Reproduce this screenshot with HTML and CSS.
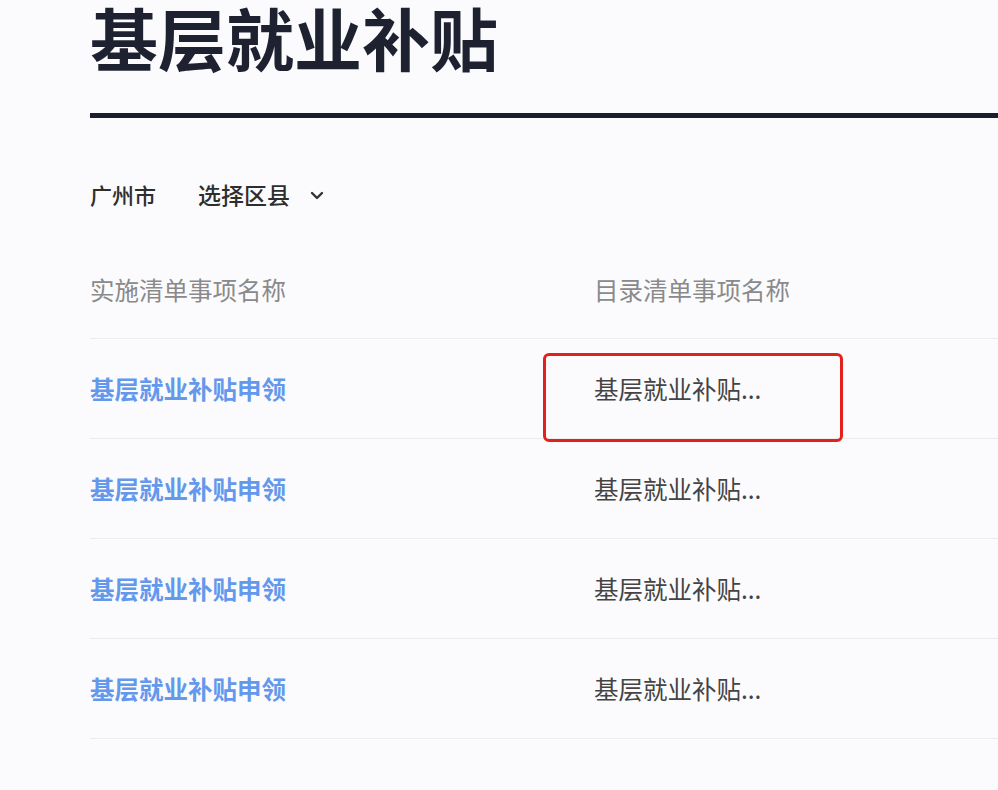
FILE: index.html
```html
<!DOCTYPE html>
<html lang="zh-CN">
<head>
  <meta charset="UTF-8">
  <title>基层就业补贴</title>
  <link rel="stylesheet" href="styles.css">
</head>
<body>
  <div class="page">
    <h1 class="title">基层就业补贴</h1>
    <div class="rule"></div>

    <div class="filters">
      <span class="city">广州市</span>
      <span class="district">选择区县
        <svg class="chevron" width="14" height="9" viewBox="0 0 14 9">
          <path d="M2 2l5 5 5-5" fill="none" stroke="#333" stroke-width="2.4" stroke-linecap="round" stroke-linejoin="round"/>
        </svg>
      </span>
    </div>

    <div class="table">
      <div class="row head">
        <div class="cell">实施清单事项名称</div>
        <div class="cell">目录清单事项名称</div>
      </div>
      <div class="row">
        <div class="cell link">基层就业补贴申领</div>
        <div class="cell name">基层就业补贴...<span class="mark"></span></div>
      </div>
      <div class="row">
        <div class="cell link">基层就业补贴申领</div>
        <div class="cell name">基层就业补贴...</div>
      </div>
      <div class="row">
        <div class="cell link">基层就业补贴申领</div>
        <div class="cell name">基层就业补贴...</div>
      </div>
      <div class="row">
        <div class="cell link">基层就业补贴申领</div>
        <div class="cell name">基层就业补贴...</div>
      </div>
    </div>
  </div>
</body>
</html>
```

FILE: styles.css
```css
body {
  margin: 0;
  background: #fbfbfd;
  font-family: "Noto Sans CJK SC", "Noto Sans", sans-serif;
  color: #333;
}
.page {
  padding-left: 90px;
  height: 790px;
  overflow: hidden;
}
.title {
  margin: -3px 0 0;
  font-size: 68px;
  line-height: 80px;
  font-weight: 700;
  color: #1d2130;
}
.rule {
  margin-top: 36px;
  height: 5px;
  background: #1b1f2c;
}
.filters {
  display: flex;
  align-items: center;
  gap: 42px;
  margin-top: 61px;
  font-size: 22px;
  line-height: 30px;
  font-weight: 500;
  color: #2e2e2e;
}
.district {
  display: flex;
  align-items: center;
  gap: 20px;
  font-size: 23px;
}
.chevron {
  margin-top: 2px;
}
.table {
  margin-top: 32px;
}
.row {
  display: grid;
  grid-template-columns: 504px 1fr;
  align-items: center;
  height: 99px;
  border-bottom: 1px solid #ececef;
  font-size: 24.5px;
}
.row.head {
  height: 97px;
  color: #8a8a8a;
}
.cell {
  position: relative;
}
.link {
  color: #6398ec;
  font-weight: 700;
}
.name {
  color: #444;
}
.mark {
  position: absolute;
  left: -51px;
  top: -18px;
  width: 294px;
  height: 83px;
  border: 3px solid #e3211c;
  border-radius: 6px;
}
```
